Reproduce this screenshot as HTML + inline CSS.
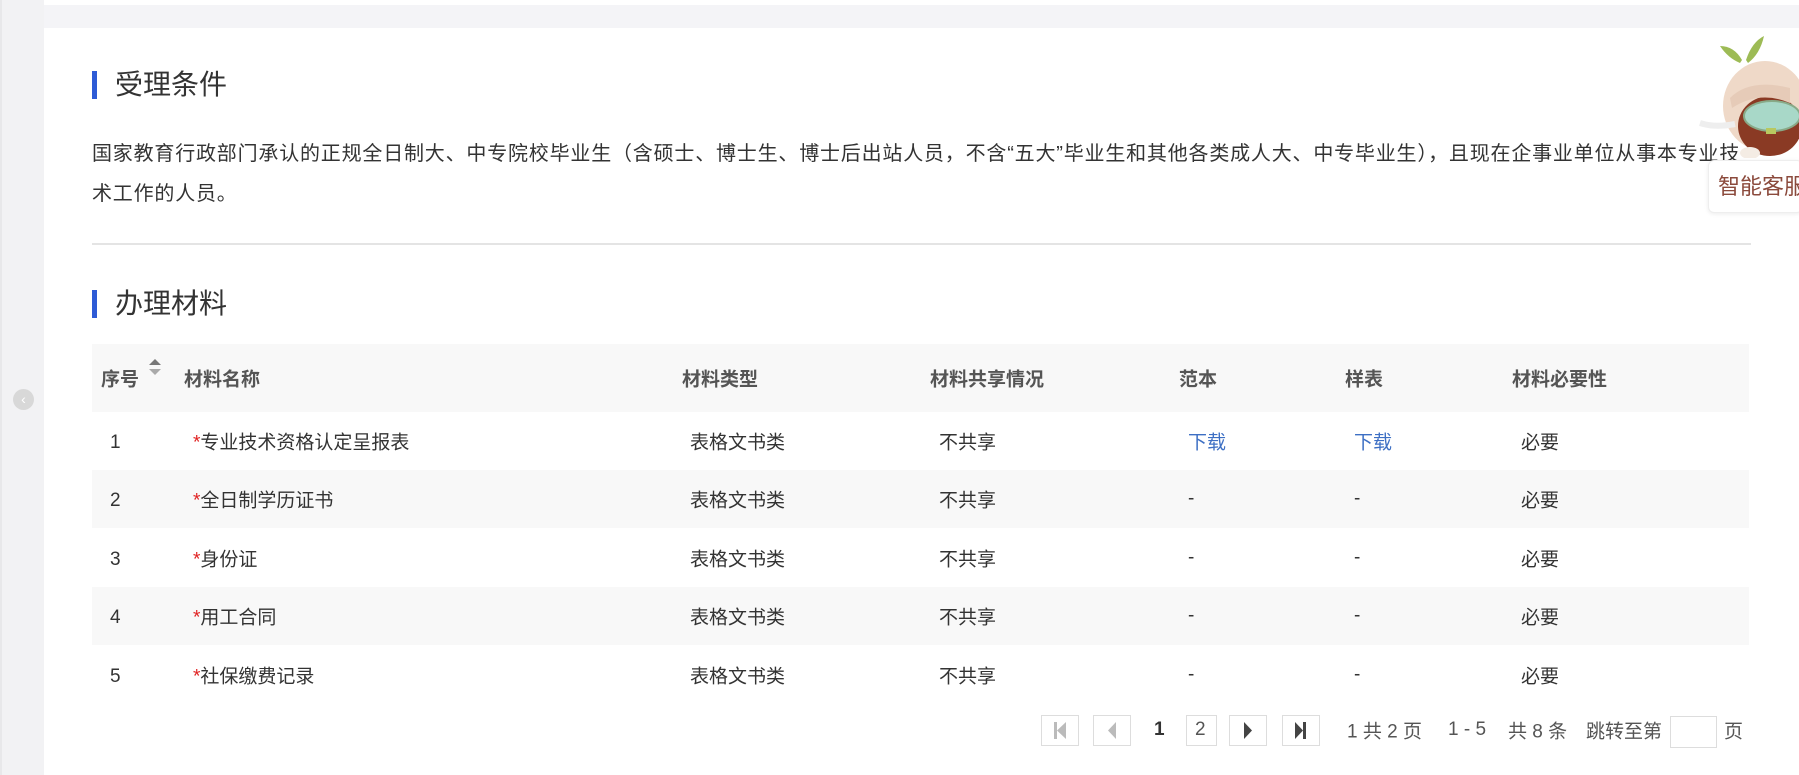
<!DOCTYPE html>
<html><head><meta charset="utf-8"><style>
*{margin:0;padding:0;box-sizing:border-box}
body{width:1799px;height:775px;overflow:hidden;background:#f4f4f7;font-family:"Liberation Sans","Noto Sans CJK SC",sans-serif;position:relative;color:#333}
.leftbar{position:absolute;left:0;top:0;width:44px;height:775px;background:#f2f2f4;border-left:2px solid #e8e8ea}
.topwhite{position:absolute;left:44px;top:0;width:1755px;height:5px;background:#fff}
.main{position:absolute;left:44px;top:28px;width:1755px;height:747px;background:#fff}
.h{position:absolute;left:92px;font-size:28px;color:#333;line-height:30px}
.h:before{content:"";position:absolute;left:0;top:1px;width:5px;height:28px;background:#2e5bd6}
.h span{margin-left:23px}
.p{position:absolute;left:92px;top:134px;font-size:20px;letter-spacing:0.8px;line-height:40px;color:#333;white-space:nowrap}
.div{position:absolute;left:92px;top:243px;width:1659px;height:2px;background:#e4e4e4}
.thead{position:absolute;left:92px;top:344px;width:1657px;height:68px;background:#f8f8f8}
.row{position:absolute;left:92px;width:1657px;height:58px}
.g{background:#f8f8f8}
.c{position:absolute;white-space:nowrap;font-size:19px;top:50%;transform:translateY(-50%)}
.n{margin-top:2px}
.th{font-weight:bold;color:#555}
.red{color:#e02020}
.lk{color:#3d6fc4}
.pg{position:absolute;top:715px;height:31px;border:1px solid #ddd;background:#fff}
.pt{position:absolute;top:730px;transform:translateY(-50%);font-size:19px;color:#555;white-space:nowrap}
</style></head><body>
<div class="leftbar"></div>
<div style="position:absolute;left:13px;top:389px;width:21px;height:21px;border-radius:50%;background:#d8d8d8;color:#fff;font-size:14px;line-height:21px;text-align:center">‹</div>
<div class="topwhite"></div>
<div class="main"></div>
<div class="h" style="top:70px"><span>受理条件</span></div>
<div class="p">国家教育行政部门承认的正规全日制大、中专院校毕业生（含硕士、博士生、博士后出站人员，不含“五大”毕业生和其他各类成人大、中专毕业生），且现在企事业单位从事本专业技<br>术工作的人员。</div>
<div class="div"></div>
<div class="h" style="top:289px"><span>办理材料</span></div>
<div class="thead">
<div class="c th" style="left:9px">序号</div>
<svg style="position:absolute;left:55px;top:14px" width="16" height="18"><path d="M8 1L14 7H2Z" fill="#777"/><path d="M8 17L14 11H2Z" fill="#aaa"/></svg>
<div class="c th" style="left:92px">材料名称</div>
<div class="c th" style="left:590px">材料类型</div>
<div class="c th" style="left:838px">材料共享情况</div>
<div class="c th" style="left:1087px">范本</div>
<div class="c th" style="left:1253px">样表</div>
<div class="c th" style="left:1420px">材料必要性</div>
</div>
<div class="row" style="top:412px"><div class="c n" style="left:18px">1</div><div class="c" style="left:101px"><span class="red">*</span>专业技术资格认定呈报表</div><div class="c" style="left:598px">表格文书类</div><div class="c" style="left:847px">不共享</div><div class="c lk" style="left:1096px">下载</div><div class="c lk" style="left:1262px">下载</div><div class="c" style="left:1429px">必要</div></div>
<div class="row g" style="top:470px"><div class="c n" style="left:18px">2</div><div class="c" style="left:101px"><span class="red">*</span>全日制学历证书</div><div class="c" style="left:598px">表格文书类</div><div class="c" style="left:847px">不共享</div><div class="c" style="left:1096px">-</div><div class="c" style="left:1262px">-</div><div class="c" style="left:1429px">必要</div></div>
<div class="row" style="top:529px"><div class="c n" style="left:18px">3</div><div class="c" style="left:101px"><span class="red">*</span>身份证</div><div class="c" style="left:598px">表格文书类</div><div class="c" style="left:847px">不共享</div><div class="c" style="left:1096px">-</div><div class="c" style="left:1262px">-</div><div class="c" style="left:1429px">必要</div></div>
<div class="row g" style="top:587px"><div class="c n" style="left:18px">4</div><div class="c" style="left:101px"><span class="red">*</span>用工合同</div><div class="c" style="left:598px">表格文书类</div><div class="c" style="left:847px">不共享</div><div class="c" style="left:1096px">-</div><div class="c" style="left:1262px">-</div><div class="c" style="left:1429px">必要</div></div>
<div class="row" style="top:646px"><div class="c n" style="left:18px">5</div><div class="c" style="left:101px"><span class="red">*</span>社保缴费记录</div><div class="c" style="left:598px">表格文书类</div><div class="c" style="left:847px">不共享</div><div class="c" style="left:1096px">-</div><div class="c" style="left:1262px">-</div><div class="c" style="left:1429px">必要</div></div>

<div class="pg" style="left:1041px;width:38px"><svg width="36" height="29"><rect x="12" y="6" width="3" height="17" fill="#bbb"/><path d="M24 6V23L15 14.5Z" fill="#bbb"/></svg></div>
<div class="pg" style="left:1093px;width:38px"><svg width="36" height="29"><path d="M22 6V23L14 14.5Z" fill="#bbb"/></svg></div>
<div class="pt" style="left:1154px;color:#333;font-weight:bold">1</div>
<div class="pg" style="left:1186px;width:31px"></div><div class="pt" style="left:1195px">2</div>
<div class="pg" style="left:1229px;width:38px"><svg width="36" height="29"><path d="M14 6V23L22 14.5Z" fill="#444"/></svg></div>
<div class="pg" style="left:1282px;width:38px"><svg width="36" height="29"><path d="M12 6V23L20 14.5Z" fill="#444"/><rect x="20" y="6" width="3" height="17" fill="#444"/></svg></div>
<div class="pt" style="left:1347px">1 共 2 页</div>
<div class="pt" style="left:1448px">1 - 5</div>
<div class="pt" style="left:1508px">共 8 条</div>
<div class="pt" style="left:1586px">跳转至第</div>
<div class="pg" style="left:1670px;width:47px;top:716px;height:32px"></div>
<div class="pt" style="left:1724px">页</div>

<svg style="position:absolute;left:1690px;top:28px" width="109" height="130">
<path d="M52 32Q44 18 30 18Q38 30 50 35Z" fill="#9dbb55"/><path d="M56 32Q62 14 74 8Q70 26 58 35Z" fill="#9dbb55"/>
<ellipse cx="75" cy="78" rx="42" ry="45" fill="#efd9c8"/>
<ellipse cx="80" cy="98" rx="32" ry="30" fill="#8a3a24"/>
<path d="M40 70Q60 50 100 60L100 75Q70 62 42 80Z" fill="#e6cbb8"/>
<ellipse cx="82" cy="88" rx="28" ry="15" fill="#a8d8c8" stroke="#8a8" stroke-width="2"/>
<rect x="76" y="100" width="10" height="6" fill="#b8c860"/>
<path d="M10 95Q25 100 45 96" stroke="#eee" stroke-width="6" fill="none"/>
<ellipse cx="60" cy="125" rx="10" ry="6" fill="#f4ece4"/>
</svg>
<div style="position:absolute;left:1708px;top:160px;width:95px;height:53px;background:#fff;border:1px solid #eee;border-radius:6px;box-shadow:0 1px 4px rgba(0,0,0,.08);font-size:22px;color:#8b4a3c;line-height:51px;padding-left:9px;white-space:nowrap">智能客服</div>
</body></html>
